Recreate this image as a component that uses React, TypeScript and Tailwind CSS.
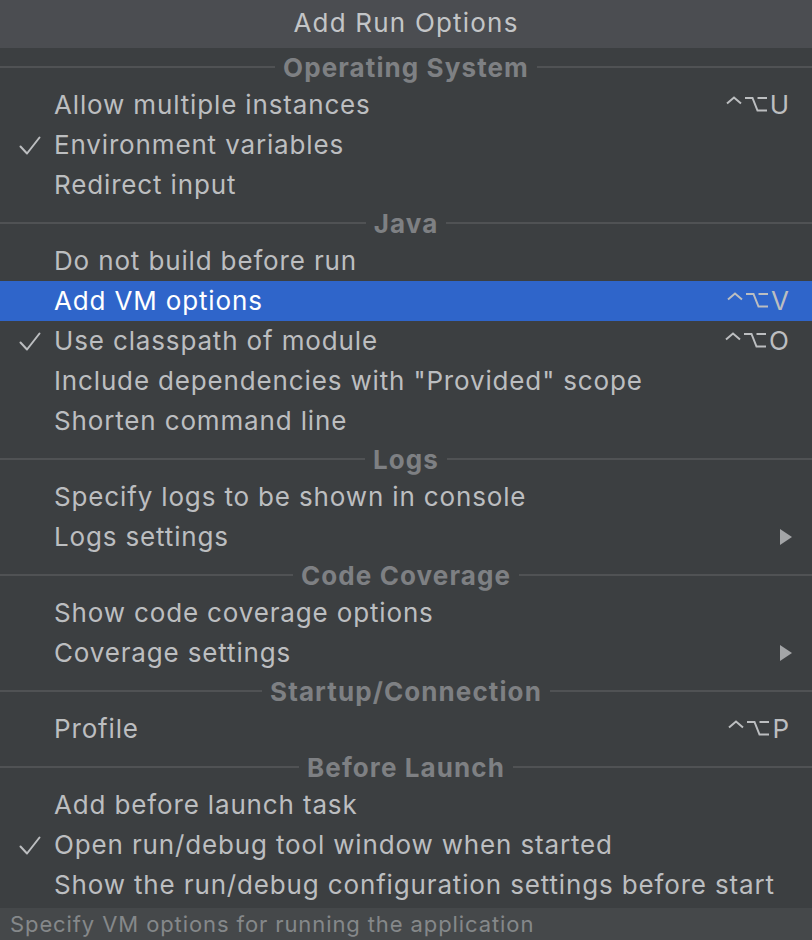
import React from 'react';

type Item = {
  label: string;
  checked?: boolean;
  shortcut?: string;
  submenu?: boolean;
  selected?: boolean;
};

type Section = { title: string; items: Item[] };

const sections: Section[] = [
  {
    title: 'Operating System',
    items: [
      { label: 'Allow multiple instances', shortcut: 'U' },
      { label: 'Environment variables', checked: true },
      { label: 'Redirect input' },
    ],
  },
  {
    title: 'Java',
    items: [
      { label: 'Do not build before run' },
      { label: 'Add VM options', shortcut: 'V', selected: true },
      { label: 'Use classpath of module', checked: true, shortcut: 'O' },
      { label: 'Include dependencies with "Provided" scope' },
      { label: 'Shorten command line' },
    ],
  },
  {
    title: 'Logs',
    items: [
      { label: 'Specify logs to be shown in console' },
      { label: 'Logs settings', submenu: true },
    ],
  },
  {
    title: 'Code Coverage',
    items: [
      { label: 'Show code coverage options' },
      { label: 'Coverage settings', submenu: true },
    ],
  },
  {
    title: 'Startup/Connection',
    items: [{ label: 'Profile', shortcut: 'P' }],
  },
  {
    title: 'Before Launch',
    items: [
      { label: 'Add before launch task' },
      { label: 'Open run/debug tool window when started', checked: true },
      { label: 'Show the run/debug configuration settings before start' },
    ],
  },
];

const CheckMark = () => (
  <svg width="22" height="19" viewBox="0 0 22 19" fill="none">
    <polyline points="1.5,10.5 8,17.5 20.5,1.5" stroke="currentColor" strokeWidth="2" strokeLinecap="round" strokeLinejoin="round" />
  </svg>
);

// ^ (control) and ⌥ (option) key glyphs
const ModifierKeys = () => (
  <svg width="42" height="16" viewBox="0 0 42 16" fill="none" className="-translate-y-[1px]">
    <polyline points="1,7.5 8,1.5 15,7.5" stroke="currentColor" strokeWidth="2" />
    <path d="M19 2H26.5L31.5 14.5H41M31.5 2H41" stroke="currentColor" strokeWidth="2" />
  </svg>
);

const Shortcut = ({ letter }: { letter: string }) => (
  <div className="flex items-center gap-[2px] text-[#bcbec0]">
    <ModifierKeys />
    <span className="text-[26px] leading-none">{letter}</span>
  </div>
);

const SectionHeader = ({ title }: { title: string }) => (
  <div className="flex h-[36px] items-center gap-[8px]">
    <div className="h-[2px] flex-1 bg-[#505254]" />
    <span className="translate-y-[1px] text-[26px] font-bold leading-none tracking-[1.1px] text-[#7e8083]">
      {title}
    </span>
    <div className="h-[2px] flex-1 bg-[#505254]" />
  </div>
);

const MenuRow = ({ item }: { item: Item }) => (
  <div
    className={
      item.selected
        ? 'flex h-[40px] items-center bg-[#2f65ca] pr-[23px] text-white'
        : 'flex h-[40px] items-center pr-[23px] text-[#bcbec0]'
    }
  >
    <div className="flex w-[54px] pl-[19px] text-[#bcbec0]">
      {item.checked && <CheckMark />}
    </div>
    <span className="flex-1 text-[26px] leading-none tracking-[0.85px]">{item.label}</span>
    {item.shortcut && <Shortcut letter={item.shortcut} />}
    {item.submenu && (
      <svg width="12" height="16" viewBox="0 0 12 16" className="-mr-[3px] text-[#a3a5a7]">
        <polygon points="0,0 12,8 0,16" fill="currentColor" />
      </svg>
    )}
  </div>
);

export default function App() {
  return (
    <div
      className="flex h-[940px] w-[812px] flex-col overflow-hidden bg-[#3c3f41]"
      style={{ fontFamily: 'Inter, "Noto Sans", sans-serif' }}
    >
      {/* Title bar */}
      <div className="flex h-[48px] items-center justify-center bg-[#4b4d51] pb-[3px] text-[26px] tracking-[1.2px] text-[#c3c5c7]">
        Add Run Options
      </div>

      {/* Options list */}
      <div className="flex-1 pt-[1px]">
        {sections.map((section) => (
          <div key={section.title}>
            <SectionHeader title={section.title} />
            {section.items.map((item) => (
              <MenuRow key={item.label} item={item} />
            ))}
          </div>
        ))}
      </div>

      {/* Hint footer */}
      <div className="flex h-[32px] items-center bg-[#45484a] pl-[10px] text-[22px] tracking-[0.9px] text-[#85888a]">
        Specify VM options for running the application
      </div>
    </div>
  );
}
